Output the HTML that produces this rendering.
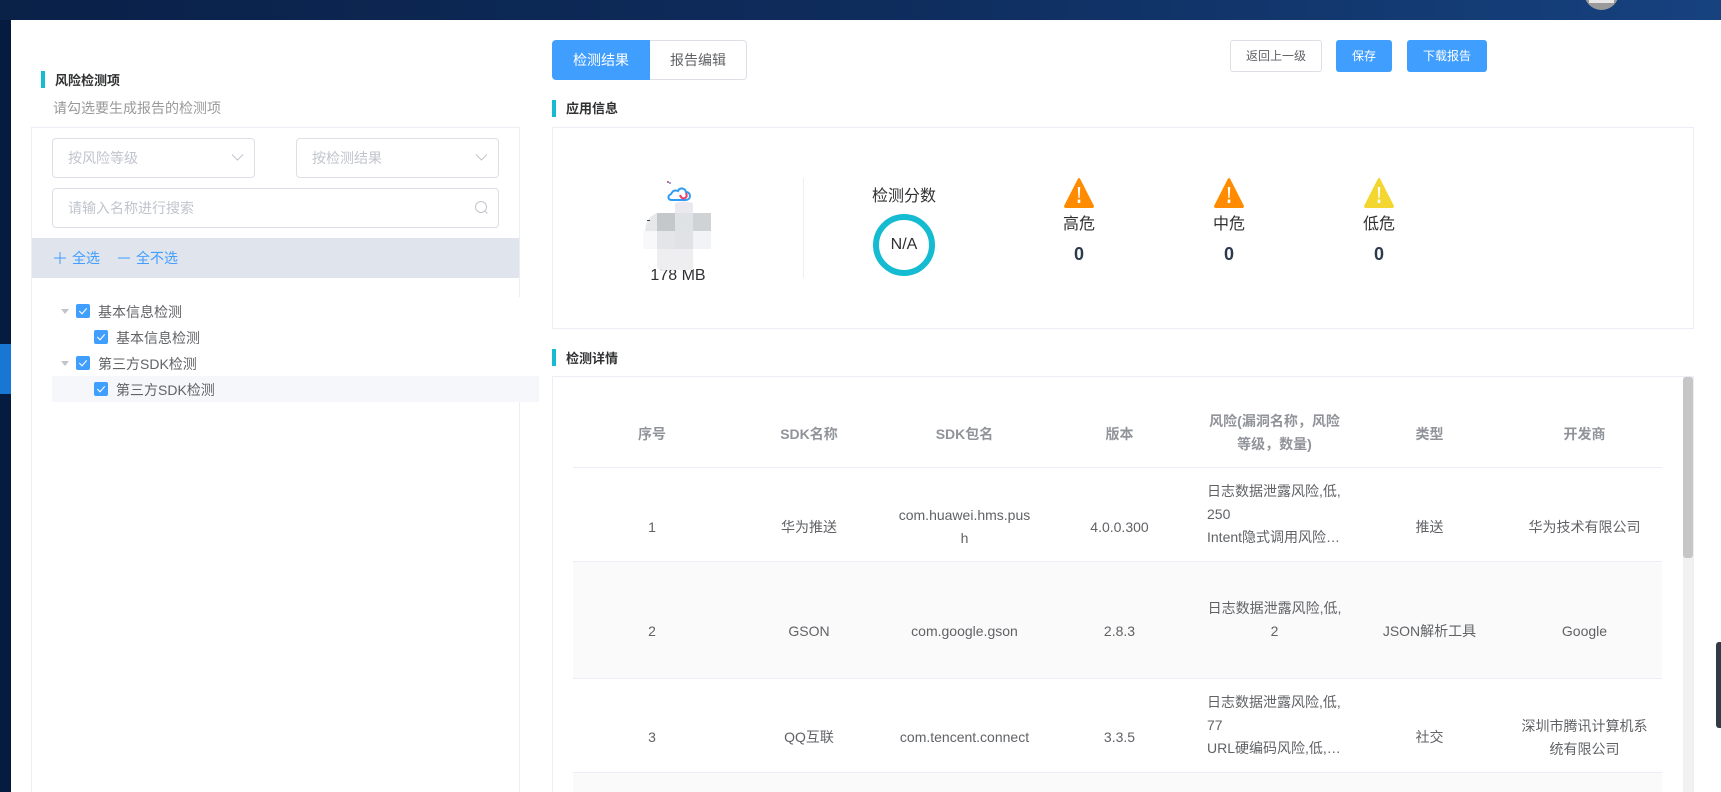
<!DOCTYPE html>
<html lang="zh">
<head>
<meta charset="utf-8">
<title>检测结果</title>
<style>
*{box-sizing:border-box}
html{margin:0;padding:0;width:1721px;height:792px;overflow:hidden}
body{margin:0;padding:0;width:1721px;height:792px;overflow:hidden;position:relative;background:#fff;font-family:"Liberation Sans","Noto Sans CJK SC",sans-serif;font-size:14px;color:#606266}
.a{position:absolute}
.t{position:absolute;white-space:nowrap;line-height:20px}
#top{left:0;top:0;width:1721px;height:20px;background:linear-gradient(90deg,#0a2148 0%,#0e2c5c 50%,#16427f 100%);overflow:hidden}
#avatar{left:1584px;top:-25px;width:35px;height:35px;border-radius:50%;background:#9a9a9a}
#avatar i{position:absolute;left:5px;top:24px;width:25px;height:4px;background:#e8e8e8;display:block}
#side{left:0;top:20px;width:11px;height:772px;background:#051c40}
#sideact{left:0;top:344px;width:11px;height:50px;background:#1976d2}
.bar{position:absolute;width:4px;height:17px;background:#15bcd1}
.h{font-weight:700;font-size:13px;color:#303133}
.panel{position:absolute;left:31px;top:127px;width:489px;height:665px;border:1px solid #ebeef5;border-right:0;border-bottom:0}
.pr1{left:519px;top:127px;width:1px;height:170px;background:#ebeef5}
.pr2{left:519px;top:402px;width:1px;height:390px;background:#ebeef5}
.box{position:absolute;border:1px solid #dcdfe6;border-radius:4px;background:#fff;height:40px}
.ph{color:#c0c4cc}
.band{left:32px;top:238px;width:487px;height:40px;background:#e0e4ed}
.blue{color:#409eff}
.rowbg{left:52px;top:376px;width:487px;height:26px;background:#f5f7fa}
.cb{position:absolute;width:14px;height:14px;background:#409eff;border-radius:2px}
.tri{position:absolute;width:0;height:0;border-left:4px solid transparent;border-right:4px solid transparent;border-top:5px solid #c0c4cc}
.btn{position:absolute;top:40px;height:32px;border-radius:3px;font-size:12px;line-height:32px;text-align:center}
.pri{background:#409eff;color:#fff}
.tab{position:absolute;top:40px;height:40px;line-height:40px;text-align:center;font-size:14px}
.card{position:absolute;left:552px;width:1142px;border:1px solid #ebeef5;background:#fff}
.c{transform:translateX(-50%)}
table{position:absolute;left:573px;top:399px;width:1089px;height:393px;border-collapse:separate;border-spacing:0;table-layout:fixed;font-size:14px;line-height:23px;color:#606266}
th{height:69px;border-bottom:1px solid #ebeef5;color:#909399;font-weight:700;padding:0 10px;text-align:center;vertical-align:middle}
td{border-bottom:1px solid #ebeef5;padding:25px 10px 0;text-align:center;vertical-align:middle;word-break:break-all}
tr.s td{padding-top:23px}
tr.n td{padding-top:24px}
td.r,tr.s td.r,tr.n td.r{padding-top:0;word-break:break-all}
td.l{text-align:left}
th.o{padding-top:2px}
.clamp{display:-webkit-box;-webkit-box-orient:vertical;-webkit-line-clamp:3;overflow:hidden}
tr.s td{background:#fafafa}
tr.e td{background:#fafafa;border-bottom:0;padding:0}
#track{left:1683px;top:377px;width:10px;height:415px;background:#f1f1f1}
#thumb{left:1683px;top:377px;width:10px;height:181px;background:#c6c6c6;border-radius:3px}
#edge{left:1716px;top:642px;width:5px;height:86px;background:#333a47;border-radius:3px 0 0 3px}
</style>
</head>
<body>
<div class="a" id="top"><div class="a" id="avatar"><i></i></div></div>
<div class="a" id="side"></div>
<div class="a" id="sideact"></div>

<div class="bar" style="left:41px;top:71px"></div>
<div class="t h" style="left:55px;top:71px">风险检测项</div>
<div class="t" style="left:53px;top:98px;color:#999">请勾选要生成报告的检测项</div>

<div class="panel"></div>
<div class="a pr1"></div>
<div class="a pr2"></div>

<div class="box" style="left:52px;top:138px;width:203px"></div>
<div class="t ph" style="left:68px;top:148px">按风险等级</div>
<svg class="a" style="left:231px;top:153px" width="13" height="9" viewBox="0 0 13 9"><path d="M1 1.500l5.500 5.500L12 1.500" fill="none" stroke="#c0c4cc" stroke-width="1"/></svg>
<div class="box" style="left:296px;top:138px;width:203px"></div>
<div class="t ph" style="left:312px;top:148px">按检测结果</div>
<svg class="a" style="left:475px;top:153px" width="13" height="9" viewBox="0 0 13 9"><path d="M1 1.500l5.500 5.500L12 1.500" fill="none" stroke="#c0c4cc" stroke-width="1"/></svg>
<div class="box" style="left:52px;top:188px;width:447px"></div>
<div class="t ph" style="left:68px;top:198px">请输入名称进行搜索</div>
<svg class="a" style="left:474px;top:200px" width="15" height="15" viewBox="0 0 15 15"><circle cx="7" cy="7" r="5.500" fill="none" stroke="#c0c4cc" stroke-width="1"/><path d="M11 11l2.500 2.500" stroke="#c0c4cc" stroke-width="1"/></svg>

<div class="a band"></div>
<svg class="a" style="left:54px;top:252px" width="12" height="12" viewBox="0 0 12 12"><path d="M6 0v12M0 6h12" stroke="#409eff" stroke-width="1"/></svg>
<div class="t blue" style="left:72px;top:248px">全选</div>
<svg class="a" style="left:118px;top:252px" width="12" height="12" viewBox="0 0 12 12"><path d="M0 6h12" stroke="#409eff" stroke-width="1"/></svg>
<div class="t blue" style="left:136px;top:248px">全不选</div>

<div class="a rowbg"></div>
<div class="tri" style="left:61px;top:309px"></div>
<div class="cb" style="left:76px;top:304px"><svg width="14" height="14" viewBox="0 0 14 14" style="display:block"><path d="M3.300 7l2.700 2.800 4.700-5.400" fill="none" stroke="#fff" stroke-width="1.100"/></svg></div>
<div class="t" style="left:98px;top:302px">基本信息检测</div>
<div class="cb" style="left:94px;top:330px"><svg width="14" height="14" viewBox="0 0 14 14" style="display:block"><path d="M3.300 7l2.700 2.800 4.700-5.400" fill="none" stroke="#fff" stroke-width="1.100"/></svg></div>
<div class="t" style="left:116px;top:328px">基本信息检测</div>
<div class="tri" style="left:61px;top:361px"></div>
<div class="cb" style="left:76px;top:356px"><svg width="14" height="14" viewBox="0 0 14 14" style="display:block"><path d="M3.300 7l2.700 2.800 4.700-5.400" fill="none" stroke="#fff" stroke-width="1.100"/></svg></div>
<div class="t" style="left:98px;top:354px">第三方SDK检测</div>
<div class="cb" style="left:94px;top:382px"><svg width="14" height="14" viewBox="0 0 14 14" style="display:block"><path d="M3.300 7l2.700 2.800 4.700-5.400" fill="none" stroke="#fff" stroke-width="1.100"/></svg></div>
<div class="t" style="left:116px;top:380px">第三方SDK检测</div>

<div class="tab pri" style="left:552px;width:98px;border-radius:4px 0 0 4px">检测结果</div>
<div class="tab" style="left:650px;width:97px;border:1px solid #dcdfe6;border-left:0;border-radius:0 4px 4px 0;line-height:38px">报告编辑</div>

<div class="btn" style="left:1230px;width:92px;border:1px solid #dcdfe6;line-height:30px;background:#fff">返回上一级</div>
<div class="btn pri" style="left:1336px;width:56px">保存</div>
<div class="btn pri" style="left:1407px;width:80px">下载报告</div>

<div class="bar" style="left:552px;top:100px"></div>
<div class="t h" style="left:566px;top:99px">应用信息</div>
<div class="card" style="top:127px;height:202px"></div>

<div class="t c" style="left:678px;top:266px;font-size:16px;color:#303133">178 MB</div>
<svg class="a" style="left:663px;top:179px" width="30" height="26" viewBox="0 0 30 26"><rect width="30" height="26" fill="#fff"/><rect x="4" y="2" width="2" height="2" fill="#d06a8a"/><rect x="6" y="3" width="2" height="2" fill="#8fa8d8"/><path d="M9 21h13c7 0 6-8 1-8-1-4-6-5-8-1-5-2-6 2-7 3-4 2-3 6 1 6z" fill="none" stroke="#2f9bf2" stroke-width="2"/><path d="M17 16c1 3 3 4 5 3 2-1 2-3 1-5" fill="none" stroke="#e8416b" stroke-width="2"/></svg>
<svg class="a" style="left:640px;top:200px" width="72" height="72" viewBox="0 0 72 72">
<path d="M35 13V3q8-3 18 0v10z" fill="#ece8f0"/>
<path d="M5 31Q6 17 17 13V31z" fill="#e6e8ea"/>
<rect x="17" y="13" width="18" height="18" fill="#c5c8ca"/>
<rect x="35" y="13" width="18" height="18" fill="#dfe2e5"/>
<rect x="53" y="13" width="18" height="18" fill="#d0d3d6"/>
<rect x="3" y="31" width="14" height="18" fill="#f8f8fa"/>
<rect x="17" y="31" width="18" height="18" fill="#e4e5e8"/>
<rect x="35" y="31" width="18" height="18" fill="#e1e2e6"/>
<rect x="53" y="31" width="18" height="18" fill="#f2f3f5"/>
<path d="M17 49H53V70H22q-5 0-5-5z" fill="#eeeef0"/>
<rect x="7" y="20" width="3" height="1" fill="#444"/>
</svg>

<div class="a" style="left:803px;top:178px;width:1px;height:100px;background:#ebeef5"></div>
<div class="t c" style="left:904px;top:187px;font-size:16px;color:#303133">检测分数</div>
<div class="a" style="left:873px;top:214px;width:62px;height:62px;border:6px solid #15bcd1;border-radius:50%"></div>
<div class="t c" style="left:904px;top:235px;font-size:16px;color:#303133">N/A</div>

<svg class="a" style="left:1064px;top:178px" width="30" height="30" viewBox="0 0 30 30"><path d="M15 0q1 0 1.500 1.500L30 28q0 2-2 2H2q-2 0-2-2L13.500 1.500Q14 0 15 0z" fill="#ff8c00"/><path d="M13.800 9h2.400l-.6 11h-1.200z" fill="#fff"/><rect x="13.700" y="21.500" width="2.600" height="3.500" fill="#fff"/></svg>
<svg class="a" style="left:1214px;top:178px" width="30" height="30" viewBox="0 0 30 30"><path d="M15 0q1 0 1.500 1.500L30 28q0 2-2 2H2q-2 0-2-2L13.500 1.500Q14 0 15 0z" fill="#ff8c00"/><path d="M13.800 9h2.400l-.6 11h-1.200z" fill="#fff"/><rect x="13.700" y="21.500" width="2.600" height="3.500" fill="#fff"/></svg>
<svg class="a" style="left:1364px;top:178px" width="30" height="30" viewBox="0 0 30 30"><path d="M15 0q1 0 1.500 1.500L30 28q0 2-2 2H2q-2 0-2-2L13.500 1.500Q14 0 15 0z" fill="#f4d630"/><path d="M13.800 9h2.400l-.6 11h-1.200z" fill="#fff"/><rect x="13.700" y="21.500" width="2.600" height="3.500" fill="#fff"/></svg>

<div class="t c" style="left:1079px;top:215px;font-size:16px;color:#303133">高危</div>
<div class="t c" style="left:1229px;top:215px;font-size:16px;color:#303133">中危</div>
<div class="t c" style="left:1379px;top:215px;font-size:16px;color:#303133">低危</div>
<div class="t c" style="left:1079px;top:244px;font-size:18px;font-weight:700;color:#2b3a4e">0</div>
<div class="t c" style="left:1229px;top:244px;font-size:18px;font-weight:700;color:#2b3a4e">0</div>
<div class="t c" style="left:1379px;top:244px;font-size:18px;font-weight:700;color:#2b3a4e">0</div>

<div class="bar" style="left:552px;top:349px"></div>
<div class="t h" style="left:566px;top:349px">检测详情</div>
<div class="card" style="top:376px;height:416px;border-bottom:0"></div>

<table>
<colgroup><col style="width:158px"><col style="width:156px"><col style="width:155px"><col style="width:155px"><col style="width:155px"><col style="width:155px"><col style="width:155px"></colgroup>
<thead><tr><th class="o">序号</th><th class="o">SDK名称</th><th class="o">SDK包名</th><th class="o">版本</th><th>风险(漏洞名称，风险等级，数量)</th><th class="o">类型</th><th class="o">开发商</th></tr></thead>
<tbody>
<tr style="height:94px"><td>1</td><td>华为推送</td><td>com.huawei.hms.push</td><td>4.0.0.300</td><td class="r l"><div class="clamp">日志数据泄露风险,低,<br>250<br>Intent隐式调用风险,低,100,URL硬编码风险</div></td><td>推送</td><td>华为技术有限公司</td></tr>
<tr class="s" style="height:117px"><td>2</td><td>GSON</td><td>com.google.gson</td><td>2.8.3</td><td class="r">日志数据泄露风险,低,<br>2</td><td>JSON解析工具</td><td>Google</td></tr>
<tr class="n" style="height:94px"><td>3</td><td>QQ互联</td><td>com.tencent.connect</td><td>3.3.5</td><td class="r l"><div class="clamp">日志数据泄露风险,低,<br>77<br>URL硬编码风险,低,100,Intent隐式调用风险</div></td><td>社交</td><td>深圳市腾讯计算机系统有限公司</td></tr>
<tr class="e" style="height:19px"><td></td><td></td><td></td><td></td><td></td><td></td><td></td></tr>
</tbody>
</table>

<div class="a" id="track"></div>
<div class="a" id="thumb"></div>
<div class="a" id="edge"></div>
</body>
</html>
